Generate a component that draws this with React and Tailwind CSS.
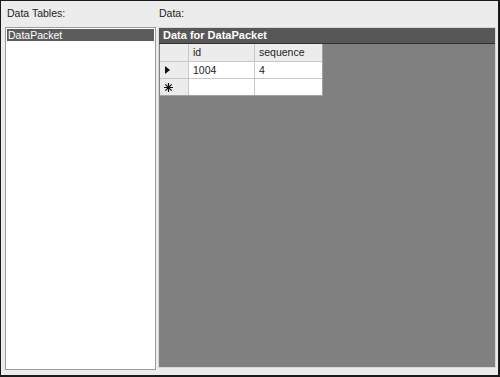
export default function App() {
  const font = { fontFamily: '"Liberation Sans", Arial, sans-serif' };
  return (
    <div
      className="w-[500px] h-[377px] box-border bg-[#ececec] border-l border-t border-r-2 border-b-2 border-[#1a1a1a] flex text-[10.5px] text-[#222]"
      style={font}
    >
      <div className="ml-[4px] w-[151px] flex flex-col pb-[5px]">
        <div className="h-[26px] pt-[6px] pl-[2px] leading-[13px]">Data Tables:</div>
        <div className="flex-1 bg-white border border-[#9a9a9a] p-[1px]">
          <div className="h-[12px] bg-[#5c5c5c] text-white leading-[12px] pl-[1px]">DataPacket</div>
        </div>
      </div>
      <div className="ml-[2px] w-[338px] flex flex-col pb-[7px]">
        <div className="h-[26px] pt-[6px] pl-[1px] leading-[13px]">Data:</div>
        <div className="flex-1 bg-[#808080] border border-[#d8d8d8] flex flex-col">
          <div className="h-[16px] bg-[#575757] border-b border-[#2e2e2e] text-white font-bold text-[11px] leading-[15px] pl-[4px]">
            Data for DataPacket
          </div>
          <div className="ml-[1px] w-[163px] border-r border-b border-[#a0a0a0] bg-white">
            <div className="flex h-[18px] border-b border-[#c8c8c8]">
              <div className="w-[29px] bg-[#ececec] border-r border-[#c8c8c8]" />
              <div className="w-[66px] bg-[#ececec] border-r border-[#c8c8c8] pl-[4px] leading-[17px]">id</div>
              <div className="flex-1 bg-[#ececec] pl-[4px] leading-[17px]">sequence</div>
            </div>
            <div className="flex h-[17px] border-b border-[#c8c8c8]">
              <div className="w-[29px] bg-[#ececec] border-r border-[#c8c8c8] flex items-center pl-[5px]">
                <svg width="5" height="8" viewBox="0 0 5 8"><path d="M0 0 L5 4 L0 8 Z" fill="#111" /></svg>
              </div>
              <div className="w-[66px] border-r border-[#c8c8c8] pl-[4px] leading-[16px]">1004</div>
              <div className="flex-1 pl-[4px] leading-[16px]">4</div>
            </div>
            <div className="flex h-[16px]">
              <div className="w-[29px] bg-[#ececec] border-r border-[#c8c8c8] flex items-center pl-[4px]">
                <svg width="9" height="9" viewBox="0 0 9 9" stroke="#111" strokeWidth="1.2">
                  <path d="M4.5 0 V9 M0 4.5 H9 M1.3 1.3 L7.7 7.7 M7.7 1.3 L1.3 7.7" />
                </svg>
              </div>
              <div className="w-[66px] border-r border-[#c8c8c8]" />
              <div className="flex-1" />
            </div>
          </div>
        </div>
      </div>
    </div>
  );
}
